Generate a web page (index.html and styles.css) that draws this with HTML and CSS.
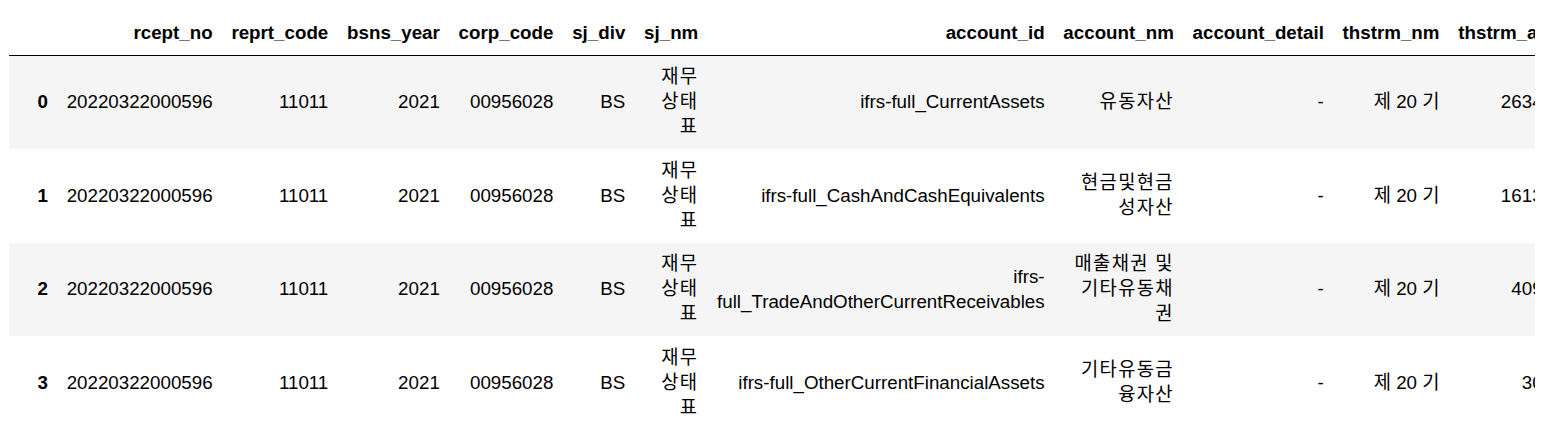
FILE: index.html
```html
<!DOCTYPE html>
<html lang="ko">
<head>
<meta charset="utf-8">
<title>DataFrame</title>
<link rel="stylesheet" href="styles.css">
</head>
<body>
<div class="output">
  <table class="dataframe">
    <thead>
      <tr>
        <th class="idx"></th>
        <th>rcept_no</th>
        <th>reprt_code</th>
        <th>bsns_year</th>
        <th>corp_code</th>
        <th>sj_div</th>
        <th>sj_nm</th>
        <th>account_id</th>
        <th>account_nm</th>
        <th>account_detail</th>
        <th>thstrm_nm</th>
        <th>thstrm_amount</th>
        <th>frmtrm_nm</th>
        <th>frmtrm_amount</th>
        <th>ord</th>
        <th>currency</th>
      </tr>
    </thead>
    <tbody>
      <tr>
        <th class="idx">0</th>
        <td>20220322000596</td>
        <td>11011</td>
        <td>2021</td>
        <td>00956028</td>
        <td>BS</td>
        <td class="ko">재무상태표</td>
        <td>ifrs-full_CurrentAssets</td>
        <td class="ko">유동자산</td>
        <td>-</td>
        <td>제 20 기</td>
        <td>263412849</td>
        <td>제 19 기</td>
        <td>228590114</td>
        <td>1</td>
        <td>KRW</td>
      </tr>
      <tr>
        <th class="idx">1</th>
        <td>20220322000596</td>
        <td>11011</td>
        <td>2021</td>
        <td>00956028</td>
        <td>BS</td>
        <td class="ko">재무상태표</td>
        <td>ifrs-full_CashAndCashEquivalents</td>
        <td class="ko">현금및현금성자산</td>
        <td>-</td>
        <td>제 20 기</td>
        <td>161385024</td>
        <td>제 19 기</td>
        <td>142007531</td>
        <td>2</td>
        <td>KRW</td>
      </tr>
      <tr>
        <th class="idx">2</th>
        <td>20220322000596</td>
        <td>11011</td>
        <td>2021</td>
        <td>00956028</td>
        <td>BS</td>
        <td class="ko">재무상태표</td>
        <td>ifrs-full_TradeAndOtherCurrentReceivables</td>
        <td class="ko">매출채권 및 기타유동채권</td>
        <td>-</td>
        <td>제 20 기</td>
        <td>40952137</td>
        <td>제 19 기</td>
        <td>35418260</td>
        <td>3</td>
        <td>KRW</td>
      </tr>
      <tr>
        <th class="idx">3</th>
        <td>20220322000596</td>
        <td>11011</td>
        <td>2021</td>
        <td>00956028</td>
        <td>BS</td>
        <td class="ko">재무상태표</td>
        <td>ifrs-full_OtherCurrentFinancialAssets</td>
        <td class="ko">기타유동금융자산</td>
        <td>-</td>
        <td>제 20 기</td>
        <td>3067530</td>
        <td>제 19 기</td>
        <td>2891047</td>
        <td>4</td>
        <td>KRW</td>
      </tr>
    </tbody>
  </table>
</div>
</body>
</html>
```

FILE: styles.css
```css
html, body {
  margin: 0;
  padding: 0;
  background: #ffffff;
}

body {
  font-family: "Liberation Sans", Arial, "Noto Sans CJK KR", sans-serif;
  color: #000000;
}

.output {
  width: 1526px;
  margin-left: 9px;
  padding-top: 11.35px;
  overflow: hidden;
}

.dataframe {
  border: none;
  border-collapse: collapse;
  border-spacing: 0;
  color: #000000;
  font-size: 18.75px;
  table-layout: auto;
}

.dataframe thead {
  border-bottom: 1px solid #000000;
  vertical-align: bottom;
}

.dataframe th,
.dataframe td {
  text-align: right;
  vertical-align: middle;
  padding: 9.375px;
  line-height: 24.9px;
  white-space: normal;
  border: none;
}

.dataframe th {
  font-weight: bold;
}

.dataframe thead th {
  vertical-align: bottom;
}

.dataframe tbody tr:nth-child(odd) {
  background: #f5f5f5;
}

.dataframe .idx {
  box-sizing: border-box;
  width: 48.25px;
  min-width: 48.25px;
}

.dataframe .ko {
  letter-spacing: 1.3px;
}
```
